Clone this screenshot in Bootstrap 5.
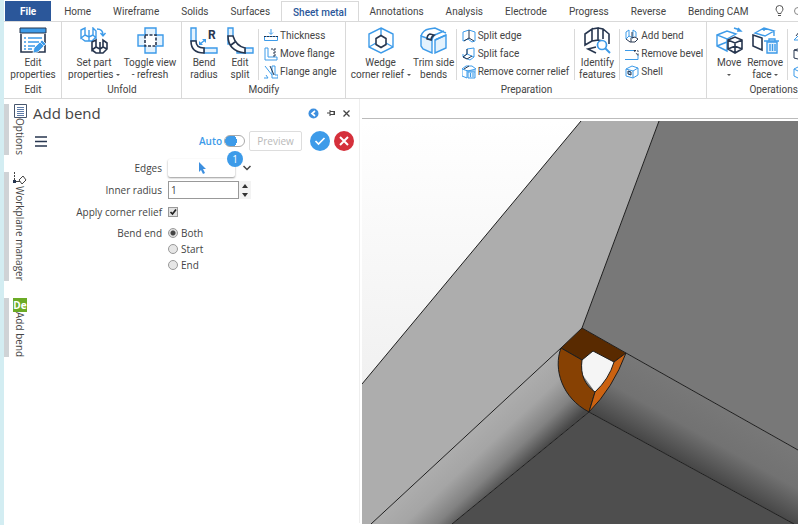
<!DOCTYPE html>
<html lang="en">
<head>
<meta charset="utf-8">
<meta name="viewport" content="width=device-width, initial-scale=1">
<title>Sheet metal - Add bend</title>
<link href="https://cdn.jsdelivr.net/npm/bootstrap@5.3.0/dist/css/bootstrap.min.css" rel="stylesheet">
<style>
:root{--ink:#444;--line:#d9d9d9;--blue:#2b579a;--sky:#3d9be9;--navy:#27364f}
body{font:10px/12px "Open Sans","Noto Sans",sans-serif;color:var(--ink);background:#fff}
.app-shell{border-left:4px solid #d3edf2;padding:1px 1px 2px 0}
button{color:inherit}
svg{display:block;flex:none}
.ln{fill:none;stroke:var(--sky);stroke-width:1.4}
.dk{fill:none;stroke:var(--navy);stroke-width:1.6}
.pale{fill:#e4f2fd;stroke:var(--sky);stroke-width:1.4}
/* ribbon tabs */
.ribbon-tabs,.ribbon-bar{font-family:Roboto,"Open Sans",sans-serif}
.ribbon-tabs{border-bottom:1px solid var(--line);height:21px;--bs-nav-tabs-border-width:0}
.ribbon-tabs .nav-link{color:var(--ink);padding:0 11px;height:21px;border:0;border-radius:0;line-height:21px;white-space:nowrap;margin:0}
.ribbon-tabs .file-tab{background:var(--blue);color:#fff;font-weight:700;padding:0 15px;margin:0 2px 0 1px;height:20px}
.ribbon-tabs .nav-link.active{color:var(--blue);background:#fff;border:1px solid var(--line);border-bottom:0;font-weight:500}
/* ribbon groups */
.ribbon-bar{border-bottom:1px solid var(--line);height:77px}
.ribbon-group{padding:3px 3px 2px 4px;border-right:1px solid var(--line);flex:none}
.ribbon-group:first-child{padding:3px 0 2px 1px}
.ribbon-rows{height:56px}
.big-tool{width:36px;padding:2px 0 0;border:0;background:none;line-height:12px;white-space:nowrap;display:flex;flex-direction:column;align-items:center}
.big-tool svg{margin-bottom:3px}
.big-tool.w-md{width:44px}.big-tool.w-lg{width:56px}.big-tool.w-xl{width:62px}
.small-tool{border:0;background:none;padding:0;height:18px;display:flex;align-items:center;gap:2px;white-space:nowrap}
.small-tool .ln,.small-tool .pale{stroke-width:1}
.tool-list{padding:2px 5px 0 5px}
.tool-rule{border-left:1px solid var(--line);margin:4px 0 1px}
.caret{display:inline-block;border:2px solid transparent;border-top-color:#555;border-bottom:0;vertical-align:middle}
/* side tabs */
.side-tabs{width:24px;padding-top:5px;gap:17px}
.side-tab{border:0;border-left:5px solid #cfd3d6;background:none;padding:0 0 0 3px;display:flex;flex-direction:column;align-items:center;line-height:14px}
.side-tab span{writing-mode:vertical-rl;white-space:nowrap}
.side-tab .de-mark{writing-mode:horizontal-tb;background:#6bab25;color:#fff;font-weight:700;line-height:14px;width:14px;text-align:center}
/* options panel */
.panel{width:332px;border-right:1px solid #eee;padding:5px 5px 0 5px;line-height:16px}
.panel h1{font-size:15px;line-height:18px;margin:0}
.plain{border:0;background:none;padding:0}
.round{width:20px;height:20px;border:0;border-radius:50%;padding:0;display:flex;align-items:center;justify-content:center}
.accept{background:var(--sky)}.cancel{background:#d5303b}
.auto-row{margin-top:9px}
.auto-row label{color:var(--sky);font-weight:600;margin-right:2px}
.menu-btn{padding-left:2px}
.auto-row .form-check-input{width:21px;height:12px;margin:0;border-color:#aaa;box-shadow:none;background:radial-gradient(circle at 6px 5px,var(--sky) 6px,transparent 6px)}
.preview-btn{line-height:16px;width:53px;padding:1px 0;border:1px solid #ddd;border-radius:2px;background:#fff;color:#b9b9b9}
.form-lines{display:grid;grid-template-columns:129px 1fr;column-gap:6px;row-gap:4px;margin-top:8px}
.form-lines>label{text-align:right;line-height:18px}
.form-lines>.lab{text-align:right;line-height:16px}
.pick-btn{width:67px;height:18px;border:0;border-radius:2px;background:#fff;box-shadow:0 1px 2px #999;display:flex;align-items:center;justify-content:center}
.count{position:absolute;right:-8px;top:-8px;width:16px;height:16px;border-radius:50%;background:var(--sky);color:#fff;line-height:16px;text-align:center}
.num-box{width:71px;height:18px;border:1px solid #999;border-radius:0;padding:0 2px;font-size:10px;color:var(--ink)}
.step-btns{width:12px;height:18px;background:#f3f3f3}
.step-btns button{height:9px;display:flex;align-items:center;justify-content:center}
.choice{gap:3px;height:16px}
.choice .form-check-input,.tick{width:10px;height:10px;margin:0;border:1px solid #999;background-color:#e6e6e6;background-size:contain;flex:none}
.choice .form-check-input:checked{background:radial-gradient(circle,#444 2px,#ddd 3px)}
.tick{appearance:none;display:block;background:#e2e2e2 url("data:image/svg+xml,%3Csvg xmlns='http://www.w3.org/2000/svg' viewBox='0 0 8 8'%3E%3Cpath fill='none' stroke='%23222' stroke-width='1.700' d='M1.500 4l2 2L7 1.500'/%3E%3C/svg%3E")}
/* viewport */
.viewport{padding:19px 0 0 2px}
.viewport-top{border-top:1px solid #bbb;height:3px;flex:none}
.work{height:calc(100vh - 102px);min-height:320px}
.scene{min-height:0}
.e{stroke:#1e1e1e;stroke-width:1;fill:none}
.relief-top{fill:#592a00}.relief-left{fill:#874103}.relief-right{fill:#cb6211}
</style>
</head>
<body>
<div class="app-shell">
<nav class="nav nav-tabs ribbon-tabs flex-nowrap overflow-hidden" aria-label="Ribbon">
<a class="nav-link file-tab" href="#">File</a><a class="nav-link" href="#">Home</a><a class="nav-link" href="#">Wireframe</a><a class="nav-link" href="#">Solids</a><a class="nav-link" href="#">Surfaces</a><a class="nav-link active" href="#" aria-current="page">Sheet metal</a><a class="nav-link" href="#">Annotations</a><a class="nav-link" href="#">Analysis</a><a class="nav-link" href="#">Electrode</a><a class="nav-link" href="#">Progress</a><a class="nav-link" href="#">Reverse</a><a class="nav-link" href="#">Bending CAM</a>
<div class="d-flex align-items-center ms-auto gap-2">
<svg width="9" height="12" viewBox="0 0 9 12" fill="none" stroke="#555"><path d="M3 8.500C3 7 1 6 1 4a3.500 3.500 0 017 0C8 6 6 7 6 8.500zM3 10.500h3"/></svg>
<svg width="6" height="12" viewBox="0 0 6 12" fill="none" stroke="#888"><path d="M6 2.500a3.500 3.500 0 000 7"/></svg>
</div>
</nav>

<div class="ribbon-bar d-flex overflow-hidden">
<section class="ribbon-group d-flex flex-column">
<div class="ribbon-rows d-flex">
<button class="big-tool w-lg"><svg width="28" height="27" viewBox="0 0 28 27"><path class="dk" d="M2 7v18h24V7"/><path fill="#3d9be9" stroke="#27364f" d="M1 1h26v5H1z"/><path class="ln" d="M5 11h2m2 0h14M5 15h2m2 0h11M5 19h2m2 0h7M5 22h2m2 0h4"/><path fill="#3d9be9" stroke="#fff" stroke-width=".7" d="M14 26l1-5 8-8 4 4-8 8z"/><path stroke="#fff" stroke-width=".7" d="M21 15l4 4"/></svg>Edit<br>properties</button>
</div><div class="text-center mt-auto">Edit</div></section>

<section class="ribbon-group d-flex flex-column">
<div class="ribbon-rows d-flex">
<button class="big-tool w-lg"><svg width="28" height="27" viewBox="0 0 28 27"><path class="ln" d="M1 3l4-2v7l-4 3zM5 8l4 2 4-2M5 1v7M9 3v7M13 1v7l3 3V4zM1 11l4 3h7l4-4M9 10v4"/><path class="dk" d="M12 15l4-2v7l-4 3zM12 23l4 3h7l4-4v-6l-4-3v7l4 2M16 20l4 2 3-2M20 15v11"/><path class="ln" d="M17 2c4 0 6 2 6 6M20.500 6l2.500 3 2.500-3"/></svg><span>Set part<br>properties <i class="caret"></i></span></button>
<button class="big-tool w-lg"><svg width="27" height="27" viewBox="0 0 27 27"><path class="pale" d="M8 1h11v7h7v11h-7v7H8v-7H1V8h7z"/><path fill="#fff" stroke="#27364f" stroke-width="1.600" stroke-dasharray="3 1.500" d="M8 8h11v11H8z"/></svg>Toggle view<br>- refresh</button>
</div><div class="text-center mt-auto">Unfold</div></section>

<section class="ribbon-group d-flex flex-column">
<div class="ribbon-rows d-flex">
<button class="big-tool"><svg width="28" height="27" viewBox="0 0 28 27"><path class="pale" d="M1 1h5v13H1zM14 21h13v5H14z"/><path fill="#fff" stroke="#27364f" stroke-width="1.600" d="M1 14h5q0 7 8 7v5Q1 26 1 14z"/><path class="ln" d="M10 17l5-4"/><path fill="#3d9be9" d="M9 18v-4l4 4zM16 12v4l-4-4z"/><text x="18" y="12" font-size="12" font-weight="700" fill="#27364f">R</text></svg>Bend<br>radius</button>
<button class="big-tool"><svg width="27" height="27" viewBox="0 0 27 27"><path class="pale" d="M1 1h5v9h-5zM18 21h8v5h-8zM1 10v7h5M10 21v5h8"/><path fill="#fff" stroke="#27364f" stroke-width="1.600" d="M1 9h5q3 10 12 12v5Q1 24 1 9zM4 18l4-3"/></svg>Edit<br>split</button>
<div class="tool-rule"></div>
<div class="tool-list">
<button class="small-tool"><svg width="14" height="14" viewBox="0 0 14 14"><path class="ln" d="M.5 7.500h13v4H.5zM7 0v5M5 3.500l2 2 2-2"/><path stroke="#27364f" stroke-dasharray="2 1" d="M0 7.500h14"/></svg>Thickness</button>
<button class="small-tool"><svg width="14" height="14" viewBox="0 0 14 14"><path class="ln" d="M1 1v12h12v-3H4V1z"/><path fill="none" stroke="#27364f" stroke-dasharray="2 1" d="M7 2h3v8M11 1v8"/></svg>Move flange</button>
<button class="small-tool"><svg width="14" height="14" viewBox="0 0 14 14"><path class="ln" d="M1 1l7 9M0 13h4l-2-3M8 1v12h6v-3h-3V1z"/><path stroke="#27364f" d="M6 1l4 9"/></svg>Flange angle</button>
</div></div><div class="text-center mt-auto">Modify</div></section>

<section class="ribbon-group d-flex flex-column">
<div class="ribbon-rows d-flex">
<button class="big-tool w-xl"><svg width="26" height="27" viewBox="0 0 26 27"><path class="ln" d="M13 1l12 6v13l-12 6-12-6V7zM13 1v8M1 20l7-4M25 20l-7-4"/><path class="dk" d="M13 8.500l5 3v6l-5 3-5-3v-6z"/></svg><span>Wedge<br>corner relief <i class="caret"></i></span></button>
<button class="big-tool w-md"><svg width="27" height="27" viewBox="0 0 27 27"><path class="pale" d="M1 9l11 4v13L3 22l-2-3zM15 13l11-5v13l-11 5z"/><path class="ln" d="M1 9q2-6 8-7l6-1 11 5M12 13q1-5 5-6l7-3M15 13l11-5"/><path class="dk" d="M7 12q0-4 3-5l4 1q-3 2-3 5z"/></svg>Trim side<br>bends</button>
<div class="tool-rule"></div>
<div class="tool-list">
<button class="small-tool"><svg width="14" height="14" viewBox="0 0 14 14"><path class="ln" d="M1 3l6-2 6 2v9l-3 1-4-3-5 2z"/><path stroke="#27364f" fill="none" d="M7 1v8l5 3M7 9l-5 3"/></svg>Split edge</button>
<button class="small-tool"><svg width="14" height="14" viewBox="0 0 14 14"><path class="ln" d="M5 2l7-1v9l-4 3-7-3 4-3zM1 7v3M12 10L5 7"/><path stroke="#27364f" fill="none" d="M5 2v5l-4 3 4 2 5-3"/></svg>Split face</button>
<button class="small-tool"><svg width="14" height="14" viewBox="0 0 14 14"><path class="ln" d="M0 4l4-3h6l4 3-8 2zM0 4v7l5 2V6"/><path stroke="#27364f" fill="none" d="M2 4l5-3"/><path class="pale" d="M6 7h7v6H6zM5 6h9M8.500 8v4M11 8v4"/></svg>Remove corner relief</button>
</div>
<div class="tool-rule"></div>
<button class="big-tool w-md"><svg width="27" height="27" viewBox="0 0 27 27"><path class="dk" d="M1 7l7-5v12l-7 4zM8 2l6-1v12l-6 1M14 1l5 1 6 5v10M19 2v10M14 13l5 1M12 20l-8 2 8 4"/><circle cx="18" cy="18" r="4.500" fill="#fff" stroke="#3d9be9" stroke-width="1.700"/><path stroke="#3d9be9" stroke-width="2" d="M21 21l5 5"/></svg>Identify<br>features</button>
<div class="tool-rule"></div>
<div class="tool-list pe-0">
<button class="small-tool"><svg width="14" height="14" viewBox="0 0 14 14"><path class="ln" d="M1 3l3-2v6l-3 3zM4 7l4 2V1M8 1l3 2v5"/><path stroke="#27364f" fill="none" d="M1 10l4 3h5l3-3-3-2-3 1V3M6 9v4"/></svg>Add bend</button>
<button class="small-tool"><svg width="14" height="14" viewBox="0 0 14 14"><path class="ln" d="M0 3.500h9M0 12.500h13V8"/><path stroke="#27364f" fill="none" stroke-dasharray="2 1.500" d="M9 3.500l4 5M9 3.500h4v5"/></svg>Remove bevel</button>
<button class="small-tool"><svg width="14" height="14" viewBox="0 0 14 14"><path class="ln" d="M1 4l6-3 6 2v7l-5 3-7-2zM1 4l7 2v7M8 6l5-3"/><path stroke="#27364f" fill="#9dcbf4" d="M3 6l3 1v3l-3-1z"/></svg>Shell</button>
</div></div><div class="text-center mt-auto">Preparation</div></section>

<section class="ribbon-group d-flex flex-column border-0">
<div class="ribbon-rows d-flex">
<button class="big-tool"><svg width="27" height="27" viewBox="0 0 27 27"><path class="ln" d="M1 8l10-4 9 3-9 5zM1 8v11l10 5V12M1 19l10-4"/><path class="dk" d="M12 13l7-3 7 3v9l-7 4-7-4zM12 13l7 3 7-3M19 16v10M12 22l7-3 7 3"/><path class="ln" d="M18 1l6 2M22 1l3 3-4 0"/></svg><span>Move<br><i class="caret"></i></span></button>
<button class="big-tool"><svg width="27" height="27" viewBox="0 0 27 27"><path class="ln" d="M3 6l9-5 10 3-9 5zM12 1v3M22 4v5"/><path class="dk" d="M1 8l9 3v12l-9-4z"/><path class="pale" d="M15 15h10v11H15z"/><path class="ln" d="M12 14h15M17 14v-2h6v2M18 17v7M20.500 17v7M23 17v7"/></svg><span>Remove<br>face <i class="caret"></i></span></button>
<div class="tool-rule ms-1"></div>
<div class="tool-list">
<button class="small-tool" aria-label="Offset"><svg width="14" height="14" viewBox="0 0 14 14"><path class="ln" d="M1 11l5-5h7M1 11h5"/><path stroke="#27364f" d="M3 7l3-4"/></svg></button>
<button class="small-tool" aria-label="Cylinder"><svg width="14" height="14" viewBox="0 0 14 14"><path fill="none" stroke="#27364f" d="M1 3q6-3 12 0v8q-6 3-12 0zq6 3 12 0"/></svg></button>
<button class="small-tool" aria-label="Box"><svg width="14" height="14" viewBox="0 0 14 14"><path class="ln" d="M1 4l6-3 6 3v7l-6 3-6-3zl6 3 6-3"/></svg></button>
</div></div><div class="text-center mt-auto ps-4">Operations</div></section>
</div>

<main class="work d-flex">
<nav class="side-tabs d-flex flex-column flex-shrink-0" aria-label="Managers">
<button class="side-tab"><svg width="13" height="14" viewBox="0 0 13 14"><path fill="#fff" stroke="#47566d" d="M.5.5h12v13H.5z"/><path stroke="#5d7ba8" d="M3 3.500h7M3 5.500h7M3 7.500h7M3 9.500h7M3 11.500h7"/></svg><span>Options</span></button>
<button class="side-tab"><svg width="14" height="14" viewBox="0 0 14 14"><path fill="none" stroke="#444" stroke-dasharray="2 1" d="M1.500 0v9"/><path fill="none" stroke="#444" d="M2 9.500h5"/><path fill="#fff" stroke="#444" d="M6 8l4-4 3 4-4 4z"/><path fill="#27364f" d="M0 8h3v3H0z"/></svg><span>Workplane manager</span></button>
<button class="side-tab"><span class="de-mark">De</span><span>Add bend</span></button>
</nav>
<section class="panel flex-shrink-0">
<header class="d-flex align-items-center"><h1 class="me-auto">Add bend</h1>
<div class="d-flex align-items-center gap-2">
<button class="plain" aria-label="Back"><svg width="11" height="11" viewBox="0 0 11 11"><circle cx="5.500" cy="5.500" r="5" fill="#3d8fdf"/><path fill="none" stroke="#fff" stroke-width="1.700" d="M7 3L4 5.500 7 8"/></svg></button>
<button class="plain" aria-label="Pin"><svg width="8" height="8" viewBox="0 0 8 8"><path fill="none" stroke="#444" d="M0 4h3M3 1v6M3 2.500h4v3H3M7.500 2v4"/></svg></button>
<button class="plain me-1" aria-label="Close"><svg width="7" height="7" viewBox="0 0 7 7"><path stroke="#444" stroke-width="1.300" d="M.5.5l6 6M6.500.5l-6 6"/></svg></button>
</div></header>
<div class="auto-row d-flex align-items-center">
<button class="plain menu-btn me-auto" aria-label="Menu"><svg width="12" height="11" viewBox="0 0 12 11"><path stroke="#27364f" stroke-width="1.600" d="M0 1h12M0 5.500h12M0 10h12"/></svg></button>
<label for="auto">Auto</label>
<span class="form-switch p-0 d-flex me-1"><input class="form-check-input" type="checkbox" role="switch" id="auto"></span>
<button class="preview-btn me-2">Preview</button>
<button class="round accept me-1" aria-label="Accept"><svg width="12" height="12" viewBox="0 0 12 12"><path fill="none" stroke="#fff" stroke-width="1.700" d="M1.500 6l3 3L10.500 3"/></svg></button>
<button class="round cancel" aria-label="Cancel"><svg width="12" height="12" viewBox="0 0 12 12"><path stroke="#fff" stroke-width="2" d="M2 2l8 8M10 2l-8 8"/></svg></button>
</div>
<form class="form-lines">
<label for="edges">Edges</label>
<div class="d-flex align-items-center"><div class="position-relative"><button type="button" class="pick-btn" id="edges" aria-label="Edges"><svg width="8" height="13" viewBox="0 0 8 13"><path fill="#3d8fdf" d="M1 0v10l2-2 2 4 2-1-2-4h3z"/></svg></button><span class="count">1</span></div>
<button type="button" class="plain ms-2" aria-label="Expand"><svg width="8" height="6" viewBox="0 0 8 6"><path fill="none" stroke="#444" stroke-width="1.500" d="M.5 1L4 4.500 7.500 1"/></svg></button></div>
<label for="radius">Inner radius</label>
<div class="d-flex"><input class="num-box" id="radius" type="text" inputmode="decimal" value="1"><div class="step-btns"><button type="button" class="plain w-100" aria-label="Increase"><svg width="6" height="4"><path fill="#333" d="M0 4l3-4 3 4z"/></svg></button><button type="button" class="plain w-100" aria-label="Decrease"><svg width="6" height="4"><path fill="#333" d="M0 0l3 4 3-4z"/></svg></button></div></div>
<label for="relief">Apply corner relief</label>
<div class="d-flex align-items-center"><input class="tick" type="checkbox" id="relief" checked></div>
<span class="lab" id="endlab">Bend end</span>
<div role="radiogroup" aria-labelledby="endlab">
<div class="choice d-flex align-items-center"><input class="form-check-input" type="radio" name="bend" id="both" checked><label for="both">Both</label></div>
<div class="choice d-flex align-items-center"><input class="form-check-input" type="radio" name="bend" id="start"><label for="start">Start</label></div>
<div class="choice d-flex align-items-center"><input class="form-check-input" type="radio" name="bend" id="end"><label for="end">End</label></div>
</div>
</form>
</section>
<section class="viewport flex-grow-1 d-flex flex-column" aria-label="Model view">
<div class="viewport-top"></div>
<svg class="scene w-100 flex-grow-1" viewBox="0 0 436 403" preserveAspectRatio="xMidYMid slice">
<defs>
<linearGradient id="sky" x2="0" y2="1"><stop stop-color="#fff"/><stop offset="1" stop-color="#e9e9e9"/></linearGradient>
<linearGradient id="bl" gradientUnits="userSpaceOnUse" x1="104" y1="315" x2="147" y2="361"><stop stop-color="#adadad"/><stop offset=".35" stop-color="#a5a5a5"/><stop offset=".7" stop-color="#828282"/><stop offset="1" stop-color="#484848"/></linearGradient>
<linearGradient id="br" gradientUnits="userSpaceOnUse" x1="350" y1="281" x2="317" y2="340"><stop stop-color="#787878"/><stop offset=".5" stop-color="#727272"/><stop offset="1" stop-color="#464646"/></linearGradient>
</defs>
<path fill="url(#sky)" d="M0 0h436v403H0z"/>
<path fill="#adadad" d="M219 0h78l-77 207-21 20L9 403H0V263z"/>
<path fill="#787878" d="M297 0h139v329L264 232l-44-25z"/>
<path fill="url(#bl)" d="M199 227L9 403h81l137-112 10-50z"/>
<path fill="url(#br)" d="M264 232l172 97v74h-4L227 291z"/>
<path fill="#4e4e4e" d="M227 291L90 403h342z"/>
<path class="e" d="M219 0L0 263M297 0l-77 207M199 227L9 403M264 232l172 97M90 403l137-112 205 112"/>
<path fill="#f5f5f5" d="M231 230l21 11-19 30-13-18v-14z"/>
<path class="e relief-top" d="M220 207l-21 20 21 12 11-9 21 11 12-9z"/>
<path class="e relief-left" d="M199 227c-8 21 1 50 28 64l6-20c-10-7-15-17-13-32z"/>
<path class="e relief-right" d="M264 232q-13 35-37 59l6-20q14-13 19-30z"/>
</svg>
</section>
</main>
</div>
<script src="https://cdn.jsdelivr.net/npm/bootstrap@5.3.0/dist/js/bootstrap.bundle.min.js"></script>
</body>
</html>
